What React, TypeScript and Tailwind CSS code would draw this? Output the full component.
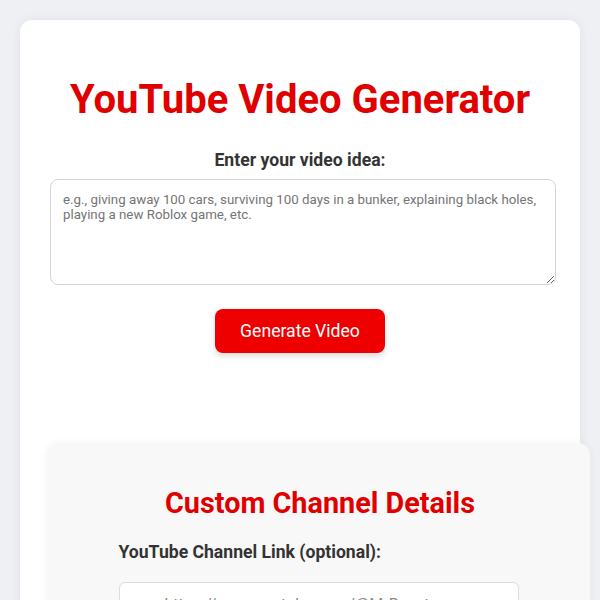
import React from "react";

const App = () => {
  return (
    <div className="min-h-[600px] bg-[#eef0f4] p-[20px] font-['Roboto',sans-serif]">
      <div className="rounded-xl bg-white px-[30px] pt-[56px] pb-[40px] shadow-[0_0_12px_rgba(0,0,0,0.06)]">
        <h1 className="text-center text-[40px] leading-[48px] font-bold text-[#e00000]">
          YouTube Video Generator
        </h1>

        <label className="mt-[24px] block text-center text-[17.6px] leading-[24px] font-bold text-[#333]">
          Enter your video idea:
        </label>
        <textarea
          className="mt-[7px] block h-[106px] w-[506px] rounded-lg border border-[#d4d4d4] px-[12px] py-[12px] text-[13.3px] leading-[15px] text-[#333] placeholder:text-[#757575] outline-none"
          placeholder="e.g., giving away 100 cars, surviving 100 days in a bunker, explaining black holes, playing a new Roblox game, etc."
        />

        <div className="mt-[24px] flex justify-center">
          <button className="h-[44px] w-[170px] rounded-lg bg-[#ee0000] text-[17.6px] text-white shadow-[0_3px_6px_rgba(0,0,0,0.15)]">
            Generate Video
          </button>
        </div>

        <section className="mt-[90px] ml-[-3px] w-[543px] rounded-xl bg-[#f8f8f8] pt-[42px] pb-[40px] shadow-[0_0_8px_rgba(0,0,0,0.05)]">
          <h2 className="pl-[3px] text-center text-[28.8px] leading-[36px] font-bold text-[#e00000]">
            Custom Channel Details
          </h2>
          <div className="mx-auto mt-[19px] w-[400px]">
            <label className="block text-[17.6px] leading-[24px] font-bold text-[#333]">
              YouTube Channel Link (optional):
            </label>
            <input
              className="mt-[18px] block h-[44px] w-full rounded-md border border-[#ddd] bg-white px-[12px] text-[16px] text-[#333] placeholder:text-[#888] outline-none"
              placeholder="e.g., https://www.youtube.com/@MrBeast"
            />
          </div>
        </section>
      </div>
    </div>
  );
};

export default App;
